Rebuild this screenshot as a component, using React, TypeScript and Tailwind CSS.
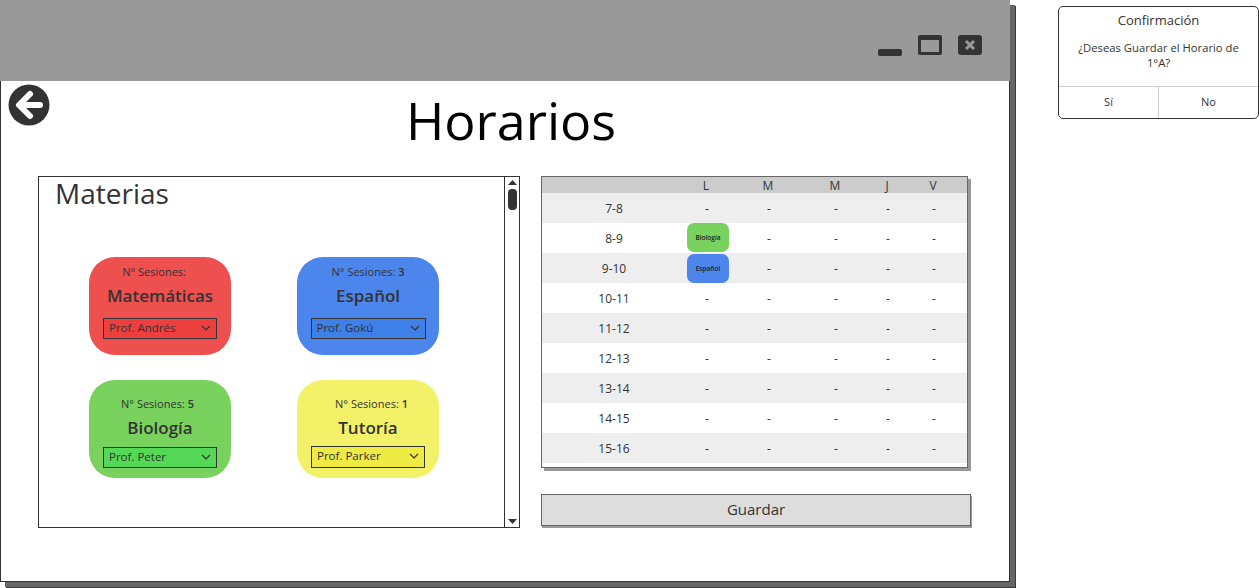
const font = { fontFamily: '"Open Sans", "Noto Sans", sans-serif' };

function Chevron() {
  return (
    <svg width="10" height="6" viewBox="0 0 10 6" fill="none" stroke="#333" strokeWidth="1.2" className="shrink-0">
      <path d="M1 1l4 4 4-4" />
    </svg>
  );
}

function Card({ count, name, prof, bg, inner, selectClass, sesClass }: { count: string; name: string; prof: string; bg: string; inner: string; selectClass: string; sesClass: string }) {
  return (
    <div className={`h-[98px] w-[142px] rounded-[26px] ${bg} flex flex-col items-center text-[#333]`}>
      <div className={`text-[11px] leading-[14px] whitespace-pre ${sesClass}`}>
        N° Sesiones: <span className="font-semibold">{count}</span>
      </div>
      <div className="text-[17px] leading-[24px] font-semibold mt-[5px]">{name}</div>
      <div className={`${inner} ${selectClass} border border-[#333] flex items-center justify-between pl-[5px] pr-[5px] text-[11.5px]`}>
        <span>{prof}</span>
        <Chevron />
      </div>
    </div>
  );
}

const rows = ["7-8", "8-9", "9-10", "10-11", "11-12", "12-13", "13-14", "14-15", "15-16"];
const cols = "grid grid-cols-[144px_40px_84px_50px_54px_38px_1fr]";

function Chip({ bg, text, className }: { bg: string; text: string; className: string }) {
  return (
    <div className={`${bg} ${className} w-[42px] h-[29px] ml-[1px] shrink-0 rounded-[7px] flex items-center justify-center text-[6.5px] font-semibold text-[#222]`}>
      {text}
    </div>
  );
}

export default function App() {
  return (
    <div className="flex items-start w-[1259px] h-[588px] bg-white overflow-hidden text-[#333]" style={font}>
      <div className="w-[1010px] h-[582px] shrink-0 flex flex-col bg-white shadow-[5px_5px_0_#666,6px_6px_0_#3a3a3a]">
        <div className="h-[81px] shrink-0 bg-[#999] flex justify-end items-start pt-[35px] pr-[28px]">
          <div className="w-[24px] h-[7px] mt-[14px] rounded-[2px] bg-[#333]" />
          <div className="w-[24px] h-[20px] ml-[16px] rounded-[2px] border-[3px] border-t-[5px] border-[#333] bg-[#999]" />
          <div className="w-[24px] h-[20px] ml-[16px] rounded-[3px] bg-[#333] flex items-center justify-center">
            <svg width="12" height="12" viewBox="0 0 12 12" stroke="#999" strokeWidth="3">
              <path d="M2 2l8 8M10 2l-8 8" />
            </svg>
          </div>
        </div>
        <div className="flex-1 border-l border-r border-b border-[#333] flex flex-col">
          <div className="flex items-start h-[95px]">
            <svg width="42" height="42" viewBox="0 0 42 42" className="ml-[7px] mt-[3px] shrink-0">
              <circle cx="21" cy="21" r="20.5" fill="#333" />
              <path d="M22 10L11 21l11 11M12 21h20" fill="none" stroke="#fff" strokeWidth="6" strokeLinecap="round" strokeLinejoin="round" />
            </svg>
            <div className="flex-1 text-center text-[52px] leading-[72px] text-black mr-[37px] mt-[3px]">Horarios</div>
          </div>
          <div className="flex items-start pl-[37px]">
            <div className="w-[482px] h-[352px] border border-[#333] flex shrink-0">
              <div className="flex-1 flex flex-col">
                <div className="text-[28px] leading-[32px] pl-[16px]">Materias</div>
                <div className="grid grid-cols-[142px_142px] gap-x-[66px] gap-y-[25px] pl-[50px] mt-[48px]">
                  <Card count="" name="Matemáticas" prof="Prof. Andrés" bg="bg-[#ee5050]" inner="bg-[#ee3f3f]" selectClass="w-[114px] h-[21px] mt-[10px] pb-[1px]" sesClass="mt-[8px] mr-[9px]" />
                  <Card count="3" name="Español" prof="Prof. Gokú" bg="bg-[#4c86ec]" inner="bg-[#3e7fe8]" selectClass="w-[115px] h-[21px] mt-[10px] pb-[1px]" sesClass="mt-[8px]" />
                  <Card count="5" name="Biología" prof="Prof. Peter" bg="bg-[#79d25e]" inner="bg-[#55d855]" selectClass="w-[114px] h-[21px] mt-[7px] pb-[1px]" sesClass="mt-[17px] mr-[5px]" />
                  <Card count="1" name="Tutoría" prof="Prof. Parker" bg="bg-[#f3f168]" inner="bg-[#efeb45]" selectClass="w-[114px] h-[22px] mt-[6px] pb-[2px]" sesClass="mt-[17px] ml-[7px]" />
                </div>
              </div>
              <div className="w-[15px] shrink-0 border-l border-[#333] flex flex-col items-center justify-between pt-[3px] pb-[3px]">
                <div className="flex flex-col items-center">
                  <svg width="9" height="5" viewBox="0 0 9 5" fill="#333"><path d="M4.5 0L9 5H0z" /></svg>
                  <div className="w-[9px] h-[21px] rounded-[4px] bg-[#333] mt-[4px]" />
                </div>
                <svg width="9" height="5" viewBox="0 0 9 5" fill="#333"><path d="M0 0h9L4.5 5z" /></svg>
              </div>
            </div>
            <div className="ml-[21px] w-[430px] shrink-0 flex flex-col">
              <div className="w-[427px] h-[292px] border border-[#666] bg-white shadow-[3px_3px_0_#999] text-[12px]">
                <div className={`${cols} h-[16px] bg-[#ccc] leading-[18px] text-center`}>
                  <div />
                  <div>L</div>
                  <div>M</div>
                  <div>M</div>
                  <div>J</div>
                  <div>V</div>
                </div>
                {rows.map((r, i) => (
                  <div key={r} className={`${cols} h-[30px] items-center text-center ${i % 2 === 0 ? "bg-[#eee]" : "bg-white"}`}>
                    <div className="pt-[1px]">{r}</div>
                    {i === 1 ? (
                      <div className="flex h-[30px] items-start">
                        <Chip bg="bg-[#79d25e]" text="Biología" className="" />
                      </div>
                    ) : i === 2 ? (
                      <div className="flex h-[30px] items-start">
                        <Chip bg="bg-[#4c86ec]" text="Español" className="mt-[1px]" />
                      </div>
                    ) : (
                      <div className="pt-[1px] pl-[2px]">-</div>
                    )}
                    <div className="pt-[1px] pl-[2px]">-</div>
                    <div className="pt-[1px] pl-[2px]">-</div>
                    <div className="pt-[1px] pl-[2px]">-</div>
                    <div className="pt-[1px] pl-[2px]">-</div>
                  </div>
                ))}
              </div>
              <button className="w-[430px] h-[32px] mt-[26px] pb-[2px] bg-[#ddd] border border-[#666] shadow-[1px_2px_0_#999] text-[15px] text-[#333] text-center">
                Guardar
              </button>
            </div>
          </div>
        </div>
      </div>
      <div className="w-[201px] h-[113px] mt-[6px] ml-[48px] shrink-0 rounded-[5px] border border-[#333] flex flex-col bg-white">
        <div className="text-[13px] leading-[18px] text-center mt-[4px]">Confirmación</div>
        <div className="text-[11.25px] leading-[15px] text-center mt-[11px] px-[16px] h-[46px]">
          ¿Deseas Guardar el Horario de 1°A?
        </div>
        <div className="flex-1 border-t border-[#ccc] flex text-[11px]">
          <div className="w-[100px] flex items-center justify-center border-r border-[#ccc]">Sí</div>
          <div className="flex-1 flex items-center justify-center">No</div>
        </div>
      </div>
    </div>
  );
}
